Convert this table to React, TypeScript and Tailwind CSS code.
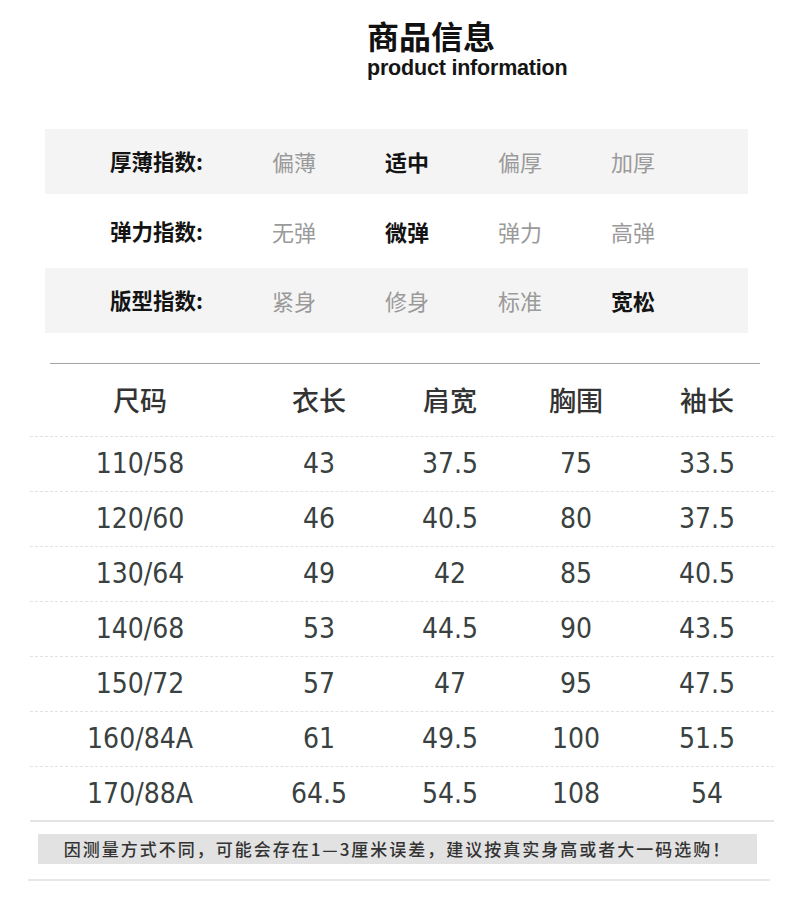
const cjk = "font-['Noto_Sans_CJK_SC','Noto_Sans',sans-serif]";

const indexRows = [
  { label: "厚薄指数:", options: ["偏薄", "适中", "偏厚", "加厚"], pick: 1, shaded: true },
  { label: "弹力指数:", options: ["无弹", "微弹", "弹力", "高弹"], pick: 1, shaded: false },
  { label: "版型指数:", options: ["紧身", "修身", "标准", "宽松"], pick: 3, shaded: true },
];

const headers = ["尺码", "衣长", "肩宽", "胸围", "袖长"];

const sizes = [
  ["110/58", "43", "37.5", "75", "33.5"],
  ["120/60", "46", "40.5", "80", "37.5"],
  ["130/64", "49", "42", "85", "40.5"],
  ["140/68", "53", "44.5", "90", "43.5"],
  ["150/72", "57", "47", "95", "47.5"],
  ["160/84A", "61", "49.5", "100", "51.5"],
  ["170/88A", "64.5", "54.5", "108", "54"],
];

const cols = "grid grid-cols-[220px_138px_124px_128px_134px]";

export default function App() {
  return (
    <main className={`w-[800px] h-[897px] overflow-hidden bg-white ${cjk}`}>
      <header className="pl-[367px] pt-[17px]">
        <h1 className="text-[32px] font-bold leading-[36px] text-[#111]">商品信息</h1>
        <p className="mt-[2px] font-['Liberation_Sans',sans-serif] text-[21.5px] font-bold leading-[26px] tracking-[-0.2px] text-[#151515]">
          product information
        </p>
      </header>

      <section className="mt-[48px] ml-[45px] w-[703px]">
        {indexRows.map((row) => (
          <div
            key={row.label}
            className={`flex items-center pl-[65px] ${row.shaded ? "h-[65px] bg-[#f4f4f4]" : "h-[74px] bg-white"}`}
          >
            <span className="w-[162px] text-[21.5px] font-bold text-[#141414]">{row.label}</span>
            {row.options.map((opt, i) => (
              <span
                key={opt}
                className={`w-[113px] text-[22px] ${i === row.pick ? "font-bold text-[#141414]" : "text-[#9a9a9a]"}`}
              >
                {opt}
              </span>
            ))}
          </div>
        ))}
      </section>

      <div className="mt-[30px] ml-[50px] w-[710px] border-t border-[#a5a5a5]" />

      <section className="ml-[30px] w-[744px]">
        <div className={`${cols} h-[73px] items-center border-b border-dashed border-[#e2e2e2] text-[27px] font-medium text-[#333]`}>
          {headers.map((h) => (
            <span key={h} className="text-center">
              {h}
            </span>
          ))}
        </div>
        {sizes.map((row, r) => (
          <div
            key={row[0]}
            className={`${cols} h-[55px] items-center font-['DejaVu_Sans',sans-serif] font-stretch-condensed text-[28px] text-[#394141] ${
              r === sizes.length - 1 ? "border-b-2 border-solid border-[#e4e4e4]" : "border-b border-dashed border-[#e2e2e2]"
            }`}
          >
            {row.map((v, i) => (
              <span key={i} className="text-center">
                {v}
              </span>
            ))}
          </div>
        ))}
      </section>

      <div className="mt-[12px] ml-[38px] flex h-[30px] w-[719px] items-center justify-center bg-[#e2e2e2]">
        <p className="text-[17px] font-medium tracking-[2px] text-[#333]">
          因测量方式不同，可能会存在1—3厘米误差，建议按真实身高或者大一码选购！
        </p>
      </div>

      <div className="mt-[15px] ml-[28px] w-[742px] border-t-2 border-[#e8e8e8]" />
    </main>
  );
}
